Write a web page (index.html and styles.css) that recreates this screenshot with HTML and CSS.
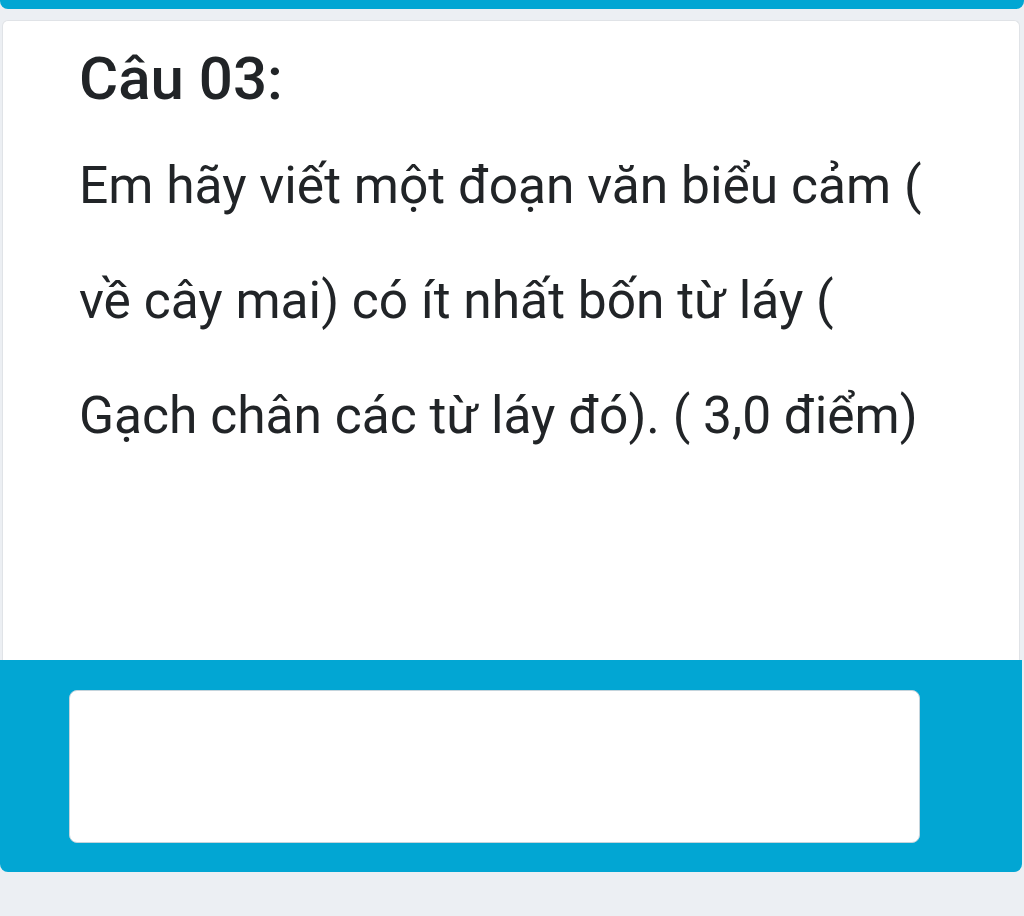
FILE: index.html
```html
<!DOCTYPE html>
<html lang="vi">
<head>
    <meta charset="UTF-8">
    <meta name="viewport" content="width=device-width, initial-scale=1.0">
    <title>Câu 03</title>
    <link rel="stylesheet" href="styles.css">
</head>
<body>
    <div class="top-bar"></div>

    <!-- Question card -->
    <div class="question-card">
        <h1 class="question-title">Câu 03:</h1>
        <p class="question-text">Em hãy viết một đoạn văn biểu cảm ( về cây mai) có ít nhất bốn từ láy ( Gạch chân các từ láy đó). ( 3,0 điểm)</p>
    </div>

    <!-- Answer area -->
    <div class="answer-panel">
        <div class="answer-box"></div>
    </div>
</body>
</html>
```

FILE: styles.css
```css
body {
    margin: 0;
    padding: 0;
    background-color: #eceff3;
    font-family: Roboto, "Noto Sans", Arial, sans-serif;
    color: #212427;
}

.top-bar {
    height: 9px;
    background-color: #02a6d3;
    border-radius: 0 0 8px 8px;
}

.question-card {
    margin: 11px 4px 0 2px;
    height: 640px;
    box-sizing: border-box;
    background-color: #ffffff;
    border: 1px solid #e0e3e7;
    border-bottom: none;
    border-radius: 6px 6px 0 0;
    padding: 0 60px 0 76px;
}

.question-title {
    margin: 0;
    padding-top: 23px;
    font-size: 60px;
    font-weight: 500;
    line-height: 70px;
}

.question-text {
    margin: 14px 0 0 0;
    font-size: 51.5px;
    font-weight: 400;
    line-height: 115px;
}

.answer-panel {
    height: 212px;
    box-sizing: border-box;
    margin-right: 2px;
    background-color: #02a6d3;
    border-radius: 0 0 8px 8px;
    padding: 30px 102px 0 69px;
}

.answer-box {
    height: 153px;
    box-sizing: border-box;
    background-color: #ffffff;
    border: 1px solid #c4d4dc;
    border-radius: 8px;
}
```
